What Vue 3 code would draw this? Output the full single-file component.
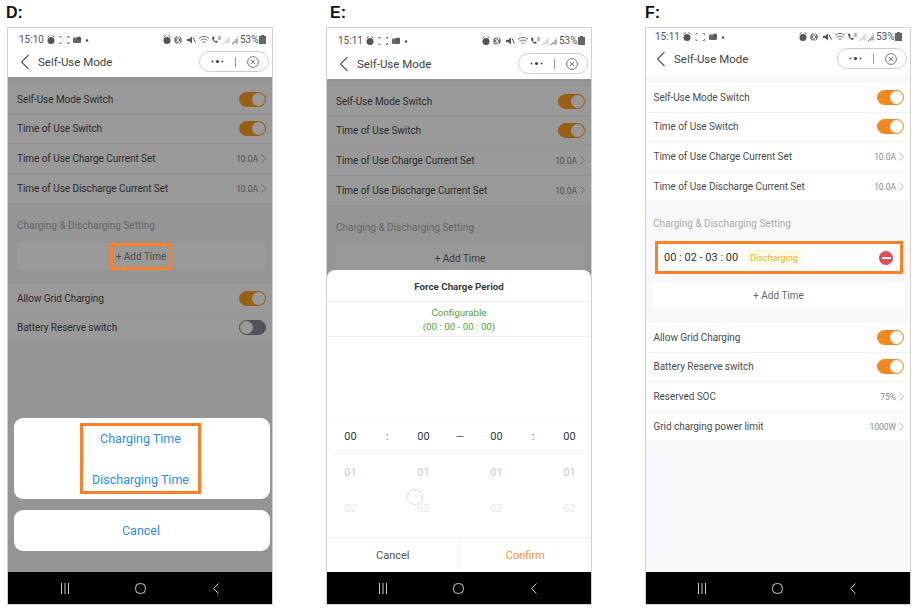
<script setup>
const base = [
  { label: 'Self-Use Mode Switch', type: 'on' },
  { label: 'Time of Use Switch', type: 'on' },
  { label: 'Time of Use Charge Current Set', value: '10.0A' },
  { label: 'Time of Use Discharge Current Set', value: '10.0A' }
]
const phones = [
  { id: 'd', name: 'D:', time: '15:10', lower: [
    { label: 'Allow Grid Charging', type: 'on' },
    { label: 'Battery Reserve switch', type: 'off' }
  ] },
  { id: 'e', name: 'E:', time: '15:11', lower: [] },
  { id: 'f', name: 'F:', time: '15:11', lower: [
    { label: 'Allow Grid Charging', type: 'on' },
    { label: 'Battery Reserve switch', type: 'on' },
    { label: 'Reserved SOC', value: '75%' },
    { label: 'Grid charging power limit', value: '1000W' }
  ] }
]
const picker = ['00', ':', '00', '—', '00', ':', '00']
const faded = [
  { cls: 'near', text: '01' },
  { cls: 'far', text: '02' }
]
</script>

<template>
  <div class="screen">
    <section v-for="p in phones" :key="p.id" class="panel" :class="'panel-' + p.id">
      <h2 class="tag">{{ p.name }}</h2>
      <div class="phone">
        <header class="head">
          <div class="status">
            <span class="clock">{{ p.time }}</span>
            <svg class="st-left" width="42" height="10" viewBox="0 0 42 10">
              <circle cx="4" cy="5.500" r="3.500" fill="#555" />
              <path d="M.5 2 2.500.5M7.500 2 5.500.5" stroke="#555" />
              <path d="M13 3V1.500h1.500M20 1.500h1.500V3M13 7v1.500h1.500M20 8.500h1.500V7" fill="none" stroke="#777" />
              <rect x="26" y="2.500" width="8" height="5.500" rx="1" fill="#666" />
              <circle cx="32" cy="3.500" r="2" fill="#555" />
              <circle cx="40" cy="5.500" r="1.300" fill="#555" />
            </svg>
            <svg class="st-right" width="75" height="10" viewBox="0 0 75 10">
              <circle cx="4" cy="5.500" r="3.500" fill="#555" />
              <path d="M.5 2 2.500.5M7.500 2 5.500.5" stroke="#555" />
              <circle cx="15" cy="5" r="3.800" fill="#777" />
              <path d="M15 1v8l2-2-4-4M15 1l2 2-4 4" fill="none" stroke="#fff" stroke-width=".7" />
              <path d="M24 4h2l3-2.500v7L26 6h-2z" fill="#555" />
              <path d="M30 2.500 32.500 7.500" stroke="#555" />
              <path d="M36 3.500a7 7 0 0 1 10 0M37.500 5.500a5 5 0 0 1 7 0M39.500 7.500a2 2 0 0 1 3 0" fill="none" stroke="#777" />
              <path d="M49 2c0 3 2 5.500 5 6l.8-1.600-1.800-1-.9.800-1.400-1.800.9-1-.8-1.800z" fill="#555" />
              <path d="M55 2h3M55 4h3" stroke="#777" />
              <path d="M60 8.500h1M62 8.500V6M64 8.500V4M66 8.500V2" stroke="#bbb" />
              <path d="M69 8.500h1M71 8.500V6M73 8.500V4M75 8.500V2" stroke="#666" />
            </svg>
            <span class="pct">53%</span>
            <svg class="batt" width="7" height="9" viewBox="0 0 7 9"><path d="M2 0h3v1h2v8H0V1h2z" fill="#666" /></svg>
          </div>
          <div class="title-row">
            <svg class="back" width="10" height="16" viewBox="0 0 10 16"><path d="M8.500 1 1.500 8l7 7" fill="none" stroke="#555" stroke-width="1.100" /></svg>
            <span class="title">Self-Use Mode</span>
            <div class="capsule">
              <svg width="13" height="5" viewBox="0 0 13 5"><circle cx="1.500" cy="2.500" r=".9" fill="#444" /><circle cx="6.500" cy="2.500" r="1.600" fill="#444" /><circle cx="11.500" cy="2.500" r=".9" fill="#444" /></svg>
              <i class="cap-line"></i>
              <svg width="12" height="12" viewBox="0 0 12 12"><circle cx="6" cy="6" r="5.400" fill="none" stroke="#555" stroke-width=".8" /><path d="M3.800 3.800 8.200 8.200M8.200 3.800 3.800 8.200" stroke="#555" stroke-width=".8" /></svg>
            </div>
          </div>
        </header>

        <div class="body">
          <div class="group">
            <div v-for="r in base" :key="r.label" class="row" :class="{ 'row-sw': r.type }">
              <span class="row-label">{{ r.label }}</span>
              <span v-if="r.type" class="toggle"><i class="knob"></i></span>
              <span v-else class="row-val">{{ r.value }}
                <svg width="5" height="9" viewBox="0 0 5 9"><path d="M.5.500 4.500 4.500.5 8.500" fill="none" stroke="#aaa" stroke-width=".8" /></svg>
              </span>
            </div>
          </div>

          <div class="section">
            <div class="sec-title">Charging &amp; Discharging Setting</div>
            <div v-if="p.id === 'f'" class="slot">
              <span class="slot-time">00 : 02 - 03 : 00</span>
              <span class="badge">Discharging</span>
              <span class="minus"><i></i></span>
            </div>
            <div class="add">
              <span class="add-text" :class="{ marked: p.id === 'd' }">+ Add Time</span>
            </div>
          </div>

          <div class="group">
            <div v-for="r in p.lower" :key="r.label" class="row" :class="{ 'row-sw': r.type }">
              <span class="row-label">{{ r.label }}</span>
              <span v-if="r.type" class="toggle" :class="{ off: r.type === 'off' }"><i class="knob"></i></span>
              <span v-else class="row-val">{{ r.value }}
                <svg width="5" height="9" viewBox="0 0 5 9"><path d="M.5.500 4.500 4.500.5 8.500" fill="none" stroke="#aaa" stroke-width=".8" /></svg>
              </span>
            </div>
          </div>

          <div v-if="p.id !== 'f'" class="scrim">
            <div v-if="p.id === 'd'" class="action">
              <div class="card choices">
                <div class="choice-box">
                  <div>Charging Time</div>
                  <div>Discharging Time</div>
                </div>
              </div>
              <div class="card cancel">Cancel</div>
            </div>
            <div v-else class="sheet">
              <div class="sheet-title">Force Charge Period</div>
              <div class="sheet-info">Configurable<br />(00 : 00 - 00 : 00)</div>
              <div class="sheet-space"></div>
              <div class="pick pick-on">
                <span v-for="(t, i) in picker" :key="i" :class="{ sep: i % 2 === 1 }">{{ t }}</span>
              </div>
              <div v-for="f in faded" :key="f.text" class="pick" :class="f.cls">
                <span v-for="n in 7" :key="n">{{ n % 2 === 1 ? f.text : '' }}</span>
              </div>
              <div class="sheet-foot">
                <span class="foot-btn">Cancel</span>
                <span class="foot-btn confirm">Confirm</span>
              </div>
              <i class="touch"></i>
            </div>
          </div>
        </div>

        <footer class="nav">
          <svg width="10" height="11" viewBox="0 0 10 11"><path d="M1.500 0v11M5 0v11M8.500 0v11" stroke="#ccc" stroke-width="1" /></svg>
          <svg width="11" height="11" viewBox="0 0 11 11"><rect x=".7" y=".7" width="9.600" height="9.600" rx="3.500" fill="none" stroke="#ccc" stroke-width="1" /></svg>
          <svg width="10" height="11" viewBox="0 0 10 11"><path d="M7.500.5 2.500 5.500l5 5" fill="none" stroke="#ccc" stroke-width="1" /></svg>
        </footer>
      </div>
    </section>
  </div>
</template>

<style scoped>
.screen {
  width: 917px;
  height: 613px;
  box-sizing: border-box;
  padding-left: 7px;
  display: flex;
  gap: 53px;
  background: #fff;
  font-family: Roboto, "Liberation Sans", sans-serif;
  overflow: hidden;
}
.panel { width: 266px; }
.tag {
  margin: 0;
  height: 27px;
  box-sizing: border-box;
  padding-top: 3px;
  font: bold 16px/20px "Liberation Sans", sans-serif;
  color: #111;
  margin-left: -1px;
}
.panel-e .tag { margin-left: 4px; }
.panel-f .tag { margin-left: 0; }
.phone {
  height: 578px;
  box-sizing: border-box;
  border: 1px solid #d2d2d2;
  display: flex;
  flex-direction: column;
  background: #f8f8fa;
}
.head { background: #fff; flex: none; }
.status {
  display: flex;
  align-items: center;
  height: 23px;
  padding-left: 11px;
  color: #555;
  font-size: 10px;
}
.panel-e .status { height: 25px; }
.panel-f .status { height: 15px; padding-left: 9px; padding-top: 1px; }
.clock { width: 28px; }
.st-right { margin-left: 74px; }
.pct { margin-left: 2px; width: 19px; }
.title-row {
  display: flex;
  align-items: center;
  height: 26px;
  box-sizing: border-box;
  padding: 0 0 5px 12px;
}
.panel-f .title-row { height: 30px; padding-bottom: 1px; padding-left: 10px; }
.back { flex: none; }
.title {
  margin-left: 8px;
  font-size: 11.500px;
  color: #444;
}
.capsule {
  margin-left: auto;
  margin-right: 3px;
  width: 70px;
  height: 21px;
  box-sizing: border-box;
  border: 1px solid #ccc;
  border-radius: 11px;
  display: flex;
  align-items: center;
  padding-left: 11px;
  background: #fff;
}
.cap-line {
  width: 1px;
  height: 10px;
  background: #999;
  margin: 0 11px;
}
.body {
  flex: 1;
  position: relative;
  padding-top: 8px;
  overflow: hidden;
}
.panel-f .body { padding-top: 9px; }
.group { background: #fff; }
.row {
  height: 30px;
  box-sizing: border-box;
  display: flex;
  align-items: center;
  justify-content: space-between;
  padding: 0 6px 0 9px;
  border-bottom: 1px solid #f2f2f4;
  font-size: 10px;
  letter-spacing: -.05px;
  color: #4c4c4c;
}
.panel-f .row { padding-left: 7.500px; }
.row-sw { height: 29.500px; }
.row-val {
  display: flex;
  align-items: center;
  gap: 3px;
  font-size: 8.500px;
  color: #888;
}
.toggle {
  width: 27px;
  height: 15px;
  box-sizing: border-box;
  border-radius: 8px;
  background: #f2881d;
  border: 1px solid #f2881d;
  display: flex;
  justify-content: flex-end;
}
.panel-d .toggle, .panel-e .toggle {
  background: #ffa024;
  border-color: #ffa024;
}
.panel-d .toggle.off {
  background: #858a96;
  border-color: #858a96;
  justify-content: flex-start;
}
.knob {
  width: 13px;
  height: 13px;
  border-radius: 50%;
  background: #fff;
}
.section {
  padding: 0 7px 15px 9px;
}
.panel-f .section { padding: 0 6px 15px 7px; }
.sec-title {
  height: 39px;
  box-sizing: border-box;
  padding-top: 3px;
  display: flex;
  align-items: center;
  font-size: 10px;
  color: #aaa;
}
.slot {
  display: flex;
  align-items: center;
  height: 33px;
  box-sizing: border-box;
  margin: 0 1px 8px 2px;
  border: 3px solid #ff7f27;
  background: #fff;
  padding: 0 7px 0 6px;
}
.slot-time { font-size: 11px; color: #333; }
.badge {
  margin-left: 8px;
  padding: 0 4px;
  height: 16px;
  line-height: 16px;
  background: #fffbe6;
  color: #e2b32a;
  font-size: 9px;
}
.minus {
  margin-left: auto;
  width: 14px;
  height: 14px;
  border-radius: 50%;
  background: #d9505a;
  display: flex;
  align-items: center;
  justify-content: center;
}
.minus i { width: 9px; height: 2px; background: #fff; }
.add {
  height: 26px;
  background: #fff;
  display: flex;
  align-items: center;
  justify-content: center;
  font-size: 10px;
  color: #666;
}
.add-text {
  display: block;
  line-height: 21px;
  border: 3px solid transparent;
  padding: 0 3px;
}
.add-text.marked {
  position: relative;
  z-index: 1;
  border-color: #ff7f27;
  color: #4c4c4c;
}
.scrim {
  position: absolute;
  inset: 0;
  background: rgba(0, 0, 0, .4);
  display: flex;
  flex-direction: column;
  justify-content: flex-end;
}
.action { padding: 0 2px 21px 6px; }
.card {
  background: #fff;
  border-radius: 9px;
  display: flex;
  align-items: center;
  justify-content: center;
  box-sizing: border-box;
  padding-right: 2px;
  color: #2a8cf0;
  font-size: 12.500px;
}
.choices { height: 81px; margin-bottom: 11px; }
.choice-box {
  width: 121px;
  height: 71px;
  box-sizing: border-box;
  margin-right: 1px;
  border: 3px solid #ff7f27;
  display: flex;
  flex-direction: column;
  align-items: center;
  justify-content: space-between;
  padding: 5px 0 3px;
  line-height: 16px;
}
.cancel { height: 41px; }
.sheet {
  position: relative;
  background: #fff;
  border-radius: 8px 8px 0 0;
}
.sheet-title {
  height: 31px;
  box-sizing: border-box;
  padding-top: 1px;
  display: flex;
  align-items: center;
  justify-content: center;
  font-size: 9.750px;
  font-weight: 700;
  color: #3c3c3c;
}
.sheet-info {
  height: 36px;
  box-sizing: border-box;
  border-top: 1px solid #f0f0f0;
  border-bottom: 1px solid #f0f0f0;
  text-align: center;
  color: #4fa044;
  font-size: 9.750px;
  line-height: 14px;
  padding-top: 4px;
}
.sheet-space { height: 82px; }
.pick {
  display: grid;
  grid-template-columns: repeat(7, 36.500px);
  justify-content: center;
  height: 36px;
  box-sizing: border-box;
  padding-left: 2px;
  align-items: center;
  text-align: center;
  font-size: 11px;
}
.pick-on {
  height: 35px;
  margin: 0 6px;
  border-top: 1px solid #f3f3f3;
  border-bottom: 1px solid #f3f3f3;
  color: #333;
}
.sep { color: #666; }
.near { color: #c8c8c8; }
.far { color: #e8e8e8; }
.sheet-foot {
  margin-top: 11px;
  height: 35px;
  box-sizing: border-box;
  border-top: 1px solid #f0f0f0;
  display: flex;
}
.foot-btn {
  flex: 1;
  display: flex;
  align-items: center;
  justify-content: center;
  font-size: 11px;
  color: #555;
}
.foot-btn + .foot-btn { border-left: 1px solid #f0f0f0; }
.confirm { color: #f5922e; }
.touch {
  position: absolute;
  left: 80px;
  top: 219px;
  width: 14px;
  height: 14px;
  border: 1.500px solid #d5daf0;
  border-radius: 50%;
}
.nav {
  flex: none;
  height: 32px;
  box-sizing: border-box;
  background: #000;
  display: flex;
  align-items: center;
  justify-content: center;
  gap: 65px;
}
.panel-e .nav, .panel-f .nav { padding-right: 2px; }
</style>

<style>
html, body { margin: 0; background: #fff; }
</style>
